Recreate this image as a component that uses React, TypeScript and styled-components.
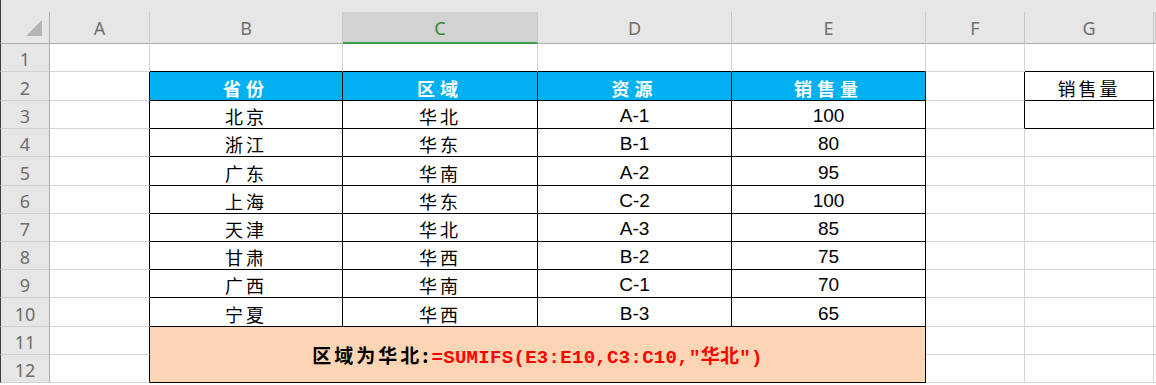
import React from "react";
import styled, { createGlobalStyle } from "styled-components";

const GlobalStyle = createGlobalStyle`
  html, body {
    margin: 0;
    padding: 0;
    background: #ffffff;
  }
`;

const colLetters = ["A", "B", "C", "D", "E", "F", "G"];
const colWidths = [100, 193, 195, 194, 194, 99, 129];
const rowHeights = [28, 29, 28, 28, 29, 28, 28, 28, 28, 29, 28, 28];

const data = [
  ["北京", "华北", "A-1", "100"],
  ["浙江", "华东", "B-1", "80"],
  ["广东", "华南", "A-2", "95"],
  ["上海", "华东", "C-2", "100"],
  ["天津", "华北", "A-3", "85"],
  ["甘肃", "华西", "B-2", "75"],
  ["广西", "华南", "C-1", "70"],
  ["宁夏", "华西", "B-3", "65"],
];

const header = ["省份", "区域", "资源", "销售量"];

// table areas that carry a thin black frame
const boxed = (r: number, c: number) =>
  (r >= 2 && r <= 12 && c >= 1 && c <= 4) || (r >= 2 && r <= 3 && c === 6);

const App = () => {
  const cells: React.ReactNode[] = [];

  for (let r = 1; r <= 12; r++) {
    cells.push(
      <RowHead key={`rh${r}`} style={{ gridRow: r + 1 }}>
        {r}
      </RowHead>
    );
    for (let c = 0; c < 7; c++) {
      if (r >= 11 && c >= 1 && c <= 4) continue;
      const right = boxed(r, c) || boxed(r, c + 1) ? "#000" : "#d4d4d4";
      const bottom = boxed(r, c) || boxed(r + 1, c) ? "#000" : "#d4d4d4";
      const pos = { gridRow: r + 1, gridColumn: c + 2 };
      let content: React.ReactNode = null;
      let num = false;

      if (r === 2 && c >= 1 && c <= 4) {
        cells.push(
          <HeadCell key={`${r}-${c}`} style={pos} $right={right} $bottom={bottom}>
            {header[c - 1]}
          </HeadCell>
        );
        continue;
      }
      if (r >= 3 && r <= 10 && c >= 1 && c <= 4) {
        content = data[r - 3][c - 1];
        if (c >= 3) num = true;
      }
      if (r === 2 && c === 6) content = "销售量";

      cells.push(
        <Cell key={`${r}-${c}`} style={pos} $right={right} $bottom={bottom} $num={num}>
          {content}
        </Cell>
      );
    }
    cells.push(<Tail key={`t${r}`} style={{ gridRow: r + 1, gridColumn: 9 }} />);
  }

  return (
    <>
      <GlobalStyle />
      <Window>
        <TopStrip />
        <Sheet>
          <Corner>
            <svg width="16" height="16" viewBox="0 0 16 16">
              <polygon points="16,0 16,16 0,16" fill="#b4b4b4" />
            </svg>
          </Corner>
          {colLetters.map((l) => (
            <ColHead key={l} $active={l === "C"}>
              {l}
            </ColHead>
          ))}
          <ColHead $active={false} />
          {cells}
          <Note>
            <NoteLabel>区域为华北:</NoteLabel>
            <Formula>=SUMIFS(E3:E10,C3:C10,"华北")</Formula>
          </Note>
        </Sheet>
      </Window>
    </>
  );
};

export default App;

const Window = styled.div`
  width: 1156px;
  height: 385px;
  overflow: hidden;
  background: #ffffff;
  display: flex;
  flex-direction: column;
`;

const TopStrip = styled.div`
  height: 12px;
  flex: none;
  background: #e6e6e6;
  border-left: 1px solid #3c3c3c;
`;

const Sheet = styled.div`
  display: grid;
  grid-template-columns: 50px ${colWidths.map((w) => `${w}px`).join(" ")} 1fr;
  grid-template-rows: 32px ${rowHeights.map((h) => `${h}px`).join(" ")} 1fr;
  flex: 1;
`;

const Corner = styled.div`
  grid-row: 1;
  grid-column: 1;
  box-sizing: border-box;
  background: #e6e6e6;
  border-left: 1px solid #3c3c3c;
  border-right: 1px solid #ababab;
  border-bottom: 1px solid #ababab;
  display: flex;
  justify-content: flex-end;
  align-items: flex-end;
  padding: 0 7px 7px 0;
`;

const ColHead = styled.div<{ $active: boolean }>`
  box-sizing: border-box;
  background: ${(p) => (p.$active ? "#d2d2d2" : "#e6e6e6")};
  border-right: 1px solid #c8c8c8;
  border-bottom: ${(p) => (p.$active ? "2px solid #3f9a48" : "1px solid #ababab")};
  color: ${(p) => (p.$active ? "#2f8a3a" : "#6e6e6e")};
  font-family: "Noto Sans", "Open Sans", sans-serif;
  font-size: 18px;
  display: flex;
  align-items: center;
  justify-content: center;
  padding-top: 1px;
`;

const RowHead = styled.div`
  grid-column: 1;
  box-sizing: border-box;
  background: #e6e6e6;
  border-left: 1px solid #3c3c3c;
  border-right: 1px solid #ababab;
  border-bottom: 1px solid #d0d0d0;
  color: #6e6e6e;
  font-family: "Noto Sans", "Open Sans", sans-serif;
  font-size: 18px;
  display: flex;
  align-items: center;
  justify-content: center;
  padding-top: 3px;
`;

const Cell = styled.div<{ $right: string; $bottom: string; $num?: boolean }>`
  box-sizing: border-box;
  border-right: 1px solid ${(p) => p.$right};
  border-bottom: 1px solid ${(p) => p.$bottom};
  color: #000;
  font-family: ${(p) =>
    p.$num
      ? `"Liberation Sans", Arial, sans-serif`
      : `"Noto Sans CJK SC", sans-serif`};
  font-size: ${(p) => (p.$num ? "19px" : "18px")};
  letter-spacing: ${(p) => (p.$num ? "0" : "3px")};
  display: flex;
  align-items: center;
  justify-content: center;
  padding-top: 3px;
  white-space: nowrap;
`;

const HeadCell = styled(Cell)`
  background: #00b0f0;
  color: #ffffff;
  font-weight: 700;
  letter-spacing: 5px;
`;

const Tail = styled.div`
  border-bottom: 1px solid #d4d4d4;
`;

const Note = styled.div`
  grid-row: 12 / span 2;
  grid-column: 3 / span 4;
  box-sizing: border-box;
  background: #fcd5b4;
  border-right: 1px solid #000;
  border-bottom: 1px solid #000;
  display: flex;
  align-items: center;
  justify-content: center;
  font-weight: 700;
  white-space: nowrap;
`;

const NoteLabel = styled.span`
  font-family: "Noto Sans CJK SC", sans-serif;
  font-size: 19px;
  letter-spacing: 3px;
  color: #000;
`;

const Formula = styled.span`
  font-family: "Liberation Mono", "Noto Sans CJK SC", monospace;
  font-size: 19px;
  letter-spacing: 0.3px;
  color: #ff0000;
`;
